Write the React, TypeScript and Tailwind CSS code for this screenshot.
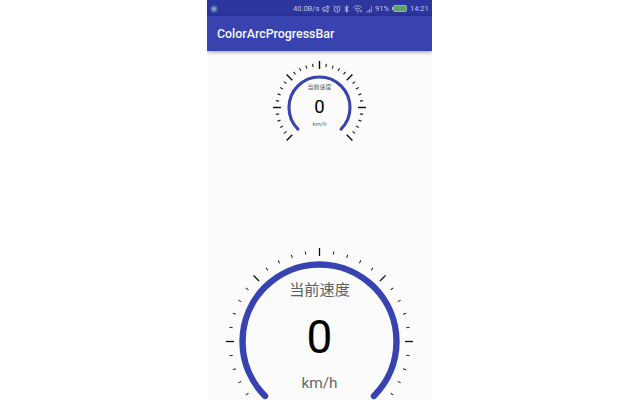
import React from 'react';

type GaugeProps = {
  radius: number;
  stroke: number;
  tickOuter: number;
  tickWidth: number;
  shortWidth: number;
  titleSize: number;
  titleY: number;
  valueSize: number;
  valueY: number;
  unitSize: number;
  unitY: number;
  className: string;
};

function Gauge(g: GaugeProps) {
  const size = g.tickOuter * 2 + 2;
  const half = size / 2;
  const end = g.radius * Math.SQRT1_2;
  const ticks = Array.from({ length: 31 }, (_, i) => i);
  return (
    <svg
      className={g.className}
      width={size}
      height={size}
      viewBox={`${-half} ${-half} ${size} ${size}`}
    >
      {ticks.map((i) => {
        const major = i % 5 === 0;
        return (
          <line
            key={i}
            x1="0"
            x2="0"
            y1={major ? -g.tickOuter : -(g.tickOuter - 2.4)}
            y2={major ? -(g.tickOuter - 8) : -(g.tickOuter - 5.6)}
            stroke={major ? '#0c0c0c' : '#222222'}
            strokeWidth={major ? g.tickWidth : g.shortWidth}
            transform={`rotate(${-135 + i * 9})`}
          />
        );
      })}
      <path
        d={`M ${-end} ${end} A ${g.radius} ${g.radius} 0 1 1 ${end} ${end}`}
        fill="none"
        stroke="#3843b2"
        strokeWidth={g.stroke}
        strokeLinecap="round"
      />
      <g textAnchor="middle" className="font-['Roboto','Noto_Sans_CJK_SC',sans-serif]">
        <text y={g.titleY} fontSize={g.titleSize} fill="#59605f">当前速度</text>
        <text y={g.valueY} fontSize={g.valueSize} fill="#000000">0</text>
        <text y={g.unitY} fontSize={g.unitSize} fill="#626866">km/h</text>
      </g>
    </svg>
  );
}

function MuteIcon() {
  return (
    <svg className="ml-[3px] h-[8px] w-[8px]" viewBox="0 0 8 8" fill="none" stroke="currentColor" strokeWidth="0.8">
      <path d="M.7 2.8h1.6L6 .8v6.4L2.3 5.2H.7zM1.2 7.3 7.4 1" />
    </svg>
  );
}

function AlarmIcon() {
  return (
    <svg className="ml-[3px] h-[8px] w-[8px]" viewBox="0 0 8 8" fill="none" stroke="currentColor" strokeWidth="0.8">
      <circle cx="4" cy="4.4" r="2.8" />
      <path d="M4 2.8v1.8l1.1.6M.5 1.8 1.9.6M7.5 1.8 6.1.6" />
    </svg>
  );
}

function BluetoothIcon() {
  return (
    <svg className="ml-[3px] h-[8px] w-[5px]" viewBox="0 0 5 8" fill="none" stroke="currentColor" strokeWidth="0.9">
      <path d="M.5 2.2 4.3 5.6 2.5 7.2V.8l1.8 1.6L.5 5.8" />
    </svg>
  );
}

function WifiIcon() {
  return (
    <svg className="ml-[4px] h-[8px] w-[9px]" viewBox="0 0 9 8" fill="none" stroke="currentColor" strokeWidth="0.8">
      <path d="M.4 2.4Q4.5-.8 8.6 2.4M1.6 4.2q2.9-2.2 5.6 0M3 5.9q1.4-1 2.8 0" />
      <circle cx="4.4" cy="7.2" r=".5" fill="currentColor" stroke="none" />
      <path d="M7.2 5v2.4M8.4 5v2.4" strokeWidth="0.6" />
    </svg>
  );
}

function SignalIcon() {
  return (
    <svg className="ml-[4px] h-[8px] w-[6px]" viewBox="0 0 6 8" fill="currentColor">
      <path d="M0 6.5h1v1H0zM1.6 5.4h1v2.1h-1zM3.2 4h1v3.5h-1z" opacity=".8" />
      <path d="M4.9.8h1v6.7h-1z" opacity=".6" />
    </svg>
  );
}

function BatteryIcon() {
  return (
    <svg className="ml-[3px] h-[7px] w-[15px]" viewBox="0 0 15 7">
      <rect x="1.5" y=".5" width="13" height="6" rx="1" fill="#5da365" stroke="#a9b1c9" strokeWidth=".9" />
      <rect x="0" y="2" width="1.4" height="3" fill="#a9b1c9" />
    </svg>
  );
}

export default function App() {
  return (
    <div className="flex h-[400px] w-[640px] overflow-hidden bg-white pl-[207px] font-['Roboto','Noto_Sans_CJK_SC',sans-serif]">
      <div className="flex h-[400px] w-[225px] flex-col overflow-hidden bg-[#fbfbfc]">
        <div className="flex h-4 shrink-0 items-center bg-[#2d359f] pt-px pr-[3px] pl-[3px] text-[7.5px] leading-none text-[#c0c4e5]">
          <svg className="h-[8px] w-[8px]" viewBox="0 0 8 8">
            <circle cx="4" cy="4" r="3.6" fill="#4a70a5" />
            <path d="M2.3 3.6a1.7 1.7 0 0 1 3.4 0v2H2.3z" fill="#83adb5" />
          </svg>
          <span className="ml-auto w-[26px] whitespace-nowrap">40.0B/s</span>
          <MuteIcon />
          <AlarmIcon />
          <BluetoothIcon />
          <WifiIcon />
          <SignalIcon />
          <span className="ml-[3px] w-[14px] whitespace-nowrap">91%</span>
          <BatteryIcon />
          <span className="ml-[3px] w-[19px] whitespace-nowrap text-[7.5px]">14:21</span>
        </div>
        <div className="flex h-[35px] shrink-0 items-center bg-[#3943b0] pt-[2px] pl-[10px] text-[12.4px] font-medium text-[#f7f7fd] shadow-[0_1px_4px_rgba(0,0,0,0.4)]">
          ColorArcProgressBar
        </div>
        <div className="flex flex-col items-center pt-[9px]">
          <Gauge
            className="shrink-0"
            radius={30.5}
            stroke={3.1}
            tickOuter={46.5}
            tickWidth={1.4}
            shortWidth={1.1}
            titleSize={6}
            titleY={-18.3}
            valueSize={18.5}
            valueY={5}
            unitSize={6}
            unitY={18.5}
          />
          <Gauge
            className="mt-[92px] shrink-0"
            radius={77}
            stroke={6.4}
            tickOuter={93.5}
            tickWidth={1.3}
            shortWidth={1}
            titleSize={15.2}
            titleY={-46.5}
            valueSize={46}
            valueY={11}
            unitSize={15.4}
            unitY={46}
          />
        </div>
      </div>
    </div>
  );
}
